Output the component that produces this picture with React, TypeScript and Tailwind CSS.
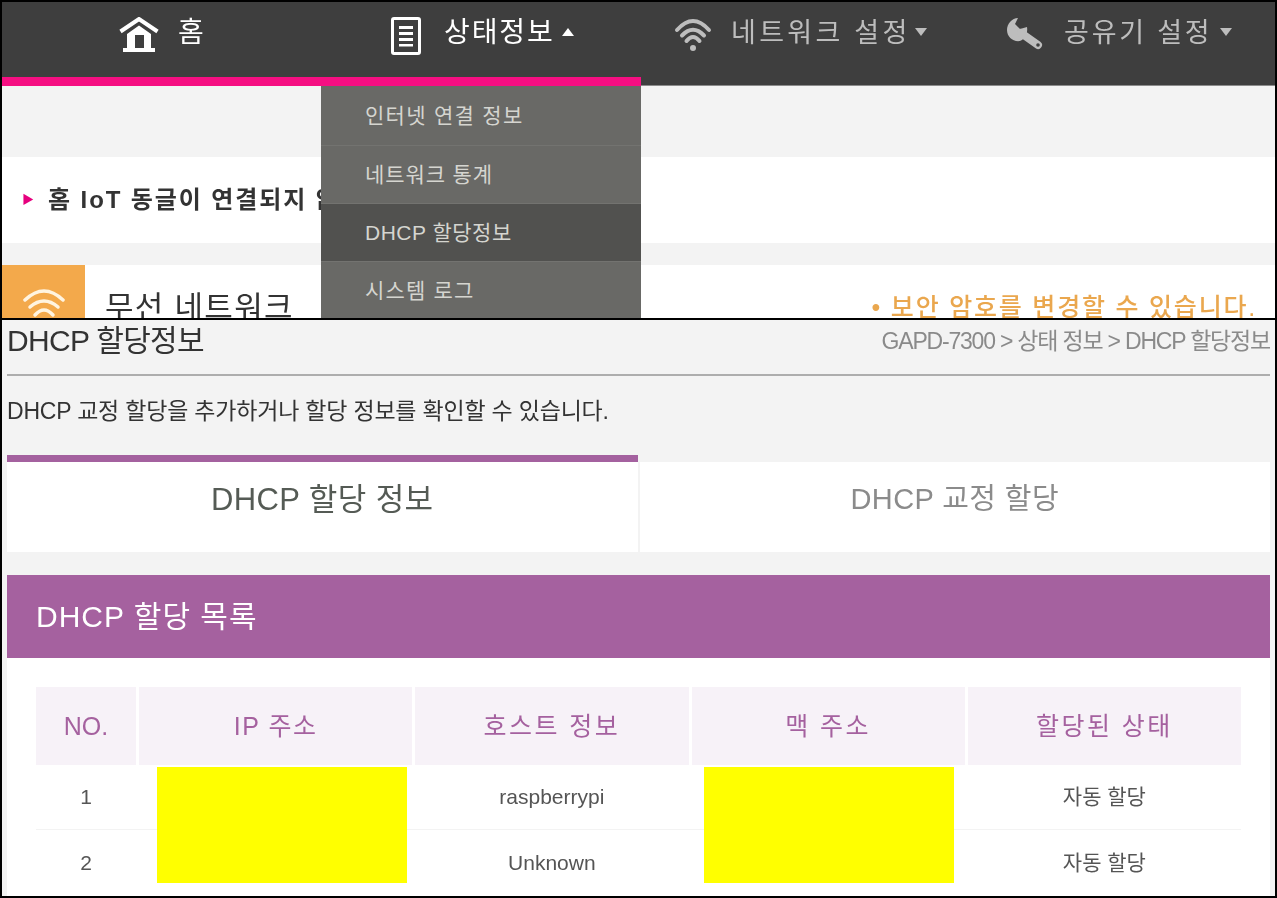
const font = { fontFamily: '"Liberation Sans", "Noto Sans CJK KR", sans-serif' }

function HomeIcon() {
  return (
    <svg width="40" height="35" viewBox="0 0 40 35" fill="none">
      <path d="M1.500 14.500L20 2l18.500 12.500" stroke="#fff" strokeWidth="4" />
      <path d="M8 17L20 8.500 32 17v14h-7V18h-9v13H8z" fill="#fff" />
      <rect x="4" y="31" width="32" height="4" fill="#fff" />
    </svg>
  )
}

function ListIcon() {
  return (
    <svg width="30" height="38" viewBox="0 0 30 38" fill="none">
      <rect x="1.500" y="1.500" width="27" height="35" rx="1.500" stroke="#fff" strokeWidth="3" />
      <rect x="8" y="9" width="14" height="3" fill="#fff" />
      <rect x="8" y="15" width="14" height="3" fill="#fff" />
      <rect x="8" y="21" width="14" height="3" fill="#fff" />
      <rect x="8" y="27" width="14" height="2.500" fill="#fff" />
    </svg>
  )
}

function WifiIcon() {
  return (
    <svg width="40" height="34" viewBox="0 0 40 34" fill="none" stroke="#bdbdbd" strokeWidth="4" strokeLinecap="round">
      <path d="M4 12Q20 -6 36 12" />
      <path d="M9 17.500Q20 6 31 17.500" />
      <path d="M13.500 23Q20 15 26.500 23" />
      <circle cx="20" cy="30" r="3" fill="#bdbdbd" stroke="none" />
    </svg>
  )
}

function WrenchIcon() {
  return (
    <svg width="36" height="34" viewBox="0 0 36 34" fill="none">
      <path d="M11 1L8 7l5 5 7-2c1 7-2 12-7 14C6 25 0 20 0 13 0 7 5 1 11 1z" fill="#bdbdbd" />
      <path d="M14 16L31 28" stroke="#bdbdbd" strokeWidth="8" strokeLinecap="round" />
      <circle cx="31" cy="28" r="1.800" fill="#3e3e3e" />
    </svg>
  )
}

function WifiOrange() {
  return (
    <svg width="42" height="30" viewBox="0 0 42 30" fill="none" stroke="#fff4e0" strokeWidth="3.500" strokeLinecap="round">
      <path d="M2 12Q21 -6 40 12" />
      <path d="M7 19Q21 7 35 19" />
      <path d="M12 27Q21 17 30 27" />
    </svg>
  )
}

function Caret({ up, color }: { up?: boolean; color: string }) {
  return (
    <svg width="12" height="8" viewBox="0 0 12 8" fill={color}>
      <path d={up ? 'M6 0l6 8H0z' : 'M0 0h12L6 8z'} />
    </svg>
  )
}

const menu = [
  { label: '인터넷 연결 정보', active: false, height: 'h-[60px]', tracking: 'tracking-[1.3px]' },
  { label: '네트워크 통계', active: false, height: 'h-[58px]', tracking: 'tracking-[0.9px]' },
  { label: 'DHCP 할당정보', active: true, height: 'h-[58px]', tracking: 'tracking-[0.5px]' },
  { label: '시스템 로그', active: false, height: 'h-[58px]', tracking: 'tracking-[1.2px]' },
]

const columns = [
  { label: 'NO.', tracking: 'tracking-normal' },
  { label: 'IP 주소', tracking: 'tracking-[1.5px]' },
  { label: '호스트 정보', tracking: 'tracking-[2.5px]' },
  { label: '맥 주소', tracking: 'tracking-[2.5px]' },
  { label: '할당된 상태', tracking: 'tracking-[2.5px]' },
]

const rows = [
  ['1', '', 'raspberrypi', '', '자동 할당'],
  ['2', '', 'Unknown', '', '자동 할당'],
]

export default function App() {
  return (
    <div style={font} className="w-[1277px] h-[898px] bg-black p-[2px] flex flex-col gap-[2px] overflow-hidden">
      {/* top capture */}
      <div className="relative h-[316px] shrink-0 overflow-hidden bg-[#f3f3f3]">
        <div className="blur-[0.4px]">
          <div className="h-[84px] bg-[#3e3e3e] flex">
            <div className="w-[319px] h-[84px] flex items-start pl-[117px] pt-[15px] border-b-[9px] border-[#f50f82]">
              <HomeIcon />
              <span className="ml-[19px] text-[28px] leading-[32px] text-white">홈</span>
            </div>
            <div className="w-[320px] h-[84px] flex items-start pl-[70px] pt-[15px] border-b-[9px] border-[#f50f82]">
              <ListIcon />
              <span className="ml-[23px] text-[28px] leading-[32px] tracking-[1.9px] text-white whitespace-nowrap">상태정보</span>
              <div className="ml-[7px] mt-[11px]"><Caret up color="#ffffff" /></div>
            </div>
            <div className="w-[318px] h-[84px] flex items-start pl-[32px] pt-[15px] border-b border-[#8b8b8b]">
              <div className="mt-[1px]"><WifiIcon /></div>
              <span className="ml-[18px] text-[27px] leading-[32px] tracking-[3.3px] text-[#bdbdbd] whitespace-nowrap">네트워크 설정</span>
              <div className="ml-[4px] mt-[11px]"><Caret color="#bdbdbd" /></div>
            </div>
            <div className="flex-1 h-[84px] flex items-start pl-[48px] pt-[15px] border-b border-[#8b8b8b]">
              <WrenchIcon />
              <span className="ml-[21px] text-[27px] leading-[32px] tracking-[2.8px] text-[#bdbdbd] whitespace-nowrap">공유기 설정</span>
              <div className="ml-[7px] mt-[11px]"><Caret color="#bdbdbd" /></div>
            </div>
          </div>
          <div className="h-[71px]" />
          <div className="h-[86px] bg-white flex items-center pl-[20px] gap-[14px]">
            <span className="text-[#e6007e] text-[12px]">▶</span>
            <span className="text-[24px] font-bold tracking-[1.9px] text-[#333] whitespace-nowrap">홈 IoT 동글이 연결되지 않았습니다</span>
          </div>
          <div className="h-[22px]" />
          <div className="h-[54px] bg-white flex">
            <div className="w-[83px] bg-[#f3a94b] flex justify-center items-start pt-[23px]"><WifiOrange /></div>
            <span className="ml-[20px] mt-[23px] text-[31px] leading-[40px] tracking-[1.3px] text-[#333] whitespace-nowrap">무선 네트워크</span>
            <span className="ml-auto mr-[18px] mt-[26px] text-[25px] leading-[32px] font-medium tracking-[1.800px] text-[#eaa74e] whitespace-nowrap">• 보안 암호를 변경할 수 있습니다.</span>
          </div>
          {/* open dropdown */}
          <div className="absolute left-[319px] top-[84px] w-[320px] h-[232px] bg-[#696966] flex flex-col text-[#d5d5d0] text-[21px]">
            {menu.map(item => (
              <div
                key={item.label}
                className={`${item.height} ${item.tracking} shrink-0 pl-[44px] flex items-center border-b border-[#737370] ${item.active ? 'bg-[#51514f]' : ''}`}
              >
                {item.label}
              </div>
            ))}
          </div>
        </div>
      </div>

      {/* bottom capture */}
      <div className="relative flex-1 min-h-0 bg-[#f3f3f3] overflow-hidden">
        <div className="h-full flex flex-col px-[5px] blur-[0.4px]">
          <div className="flex items-center justify-between h-[36px] pt-[6px]">
            <h1 className="text-[30px] leading-[36px] text-[#333] tracking-[-0.7px]">DHCP 할당정보</h1>
            <span className="text-[23px] text-[#8a8a8a] tracking-[-1.2px]">GAPD-7300 &gt; 상태 정보 &gt; DHCP 할당정보</span>
          </div>
          <div className="h-[2px] bg-[#adadad] mt-[18px] shrink-0" />
          <p className="mt-[20px] text-[23px] leading-[30px] text-[#333] tracking-[-0.2px]">DHCP 교정 할당을 추가하거나 할당 정보를 확인할 수 있습니다.</p>
          <div className="mt-[29px] h-[97px] flex gap-[2px] shrink-0">
            <div className="flex-1 bg-white border-t-[7px] border-[#a4619f] flex items-center justify-center pb-[14px] text-[31px] tracking-[0.4px] text-[#555b55]">DHCP 할당 정보</div>
            <div className="flex-1 bg-white border-t-[7px] border-[#f3f3f3] flex items-center justify-center pb-[14px] text-[29px] tracking-[0.4px] text-[#8b8b8b]">DHCP 교정 할당</div>
          </div>
          <div className="mt-[23px] h-[83px] bg-[#a5619f] flex items-center pl-[29px] text-[30px] tracking-[1px] text-white shrink-0">DHCP 할당 목록</div>
          <div className="flex-1 bg-white px-[29px] pt-[29px] min-h-0">
            <div className="grid grid-cols-[100px_repeat(4,1fr)] gap-x-[3px] text-center">
              {columns.map(c => (
                <div key={c.label} className={`h-[78px] bg-[#f7f2f8] flex items-center justify-center pt-[2px] text-[25px] ${c.tracking} text-[#a5619f]`}>{c.label}</div>
              ))}
            </div>
            {rows.map((row, r) => (
              <div key={row[0]} className={`grid grid-cols-[100px_repeat(4,1fr)] gap-x-[3px] h-[65px] text-center ${r === 0 ? 'border-b border-[#f3f3f3]' : ''}`}>
                {row.map((cell, i) => (
                  <div key={i} className="flex items-center justify-center text-[21px] text-[#555]">{cell}</div>
                ))}
              </div>
            ))}
          </div>
        </div>
        {/* redaction blocks */}
        <div className="absolute left-[155px] top-[447px] w-[250px] h-[116px] bg-[#ffff00]" />
        <div className="absolute left-[702px] top-[447px] w-[250px] h-[116px] bg-[#ffff00]" />
      </div>
    </div>
  )
}
